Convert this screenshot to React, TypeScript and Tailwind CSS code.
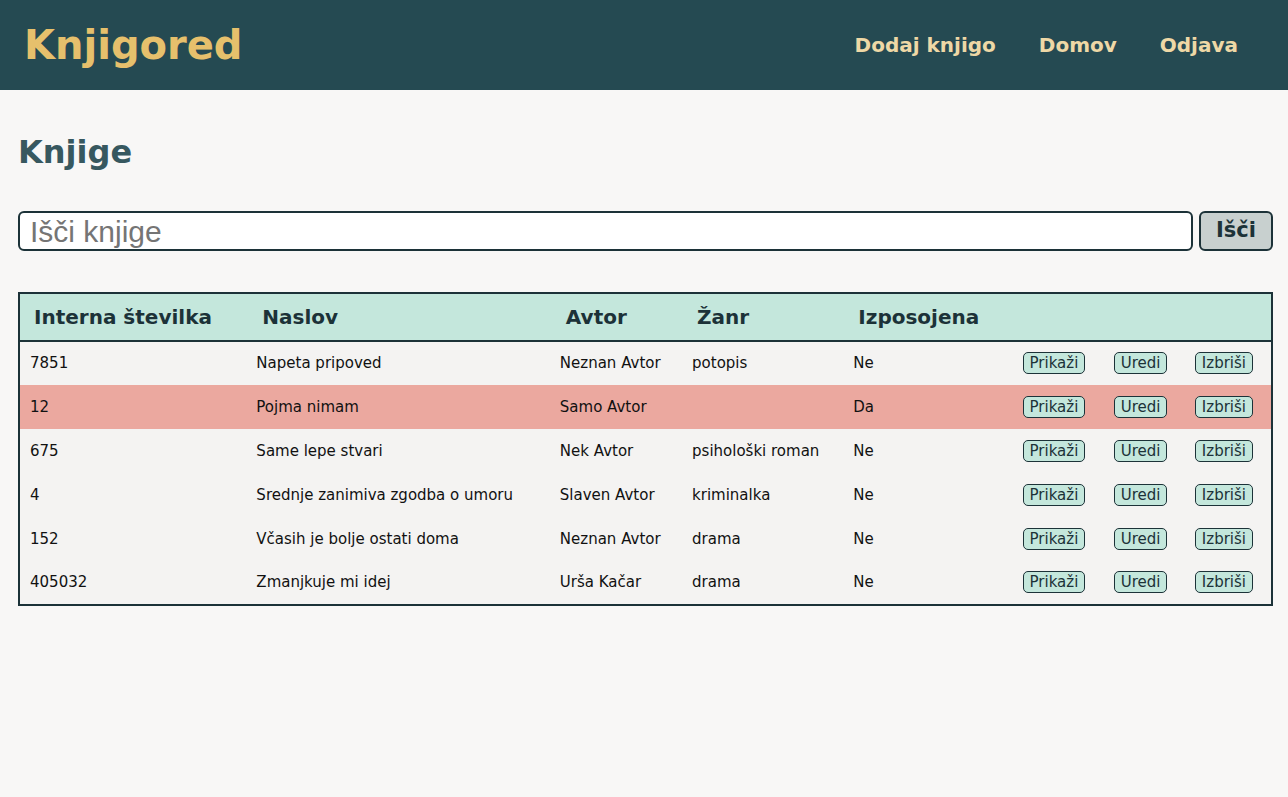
import React from 'react';

interface Book {
  id: string;
  title: string;
  author: string;
  genre: string;
  borrowed: boolean;
}

const books: Book[] = [
  { id: '7851', title: 'Napeta pripoved', author: 'Neznan Avtor', genre: 'potopis', borrowed: false },
  { id: '12', title: 'Pojma nimam', author: 'Samo Avtor', genre: '', borrowed: true },
  { id: '675', title: 'Same lepe stvari', author: 'Nek Avtor', genre: 'psihološki roman', borrowed: false },
  { id: '4', title: 'Srednje zanimiva zgodba o umoru', author: 'Slaven Avtor', genre: 'kriminalka', borrowed: false },
  { id: '152', title: 'Včasih je bolje ostati doma', author: 'Neznan Avtor', genre: 'drama', borrowed: false },
  { id: '405032', title: 'Zmanjkuje mi idej', author: 'Urša Kačar', genre: 'drama', borrowed: false },
];

const ActionButton: React.FC<{ label: string }> = ({ label }) => (
  <button className="h-[22px] bg-[#c4e7dc] border border-[#1c3238] rounded-[5px] px-[6px] text-[15px] leading-[20px] text-[#1c3238]">
    {label}
  </button>
);

const App: React.FC = () => {
  return (
    <div className="min-h-[797px] bg-[#f8f7f6] font-['DejaVu_Sans',sans-serif]">
      {/* Header */}
      <header className="h-[90px] bg-[#254a52] flex items-center justify-between pl-[24px] pr-[50px]">
        <h1 className="text-[40px] font-bold text-[#e6c06c] leading-none">Knjigored</h1>
        <nav className="flex items-center gap-[43px] text-[20px] font-bold text-[#eed8a6] leading-none">
          <a href="#">Dodaj knjigo</a>
          <a href="#">Domov</a>
          <a href="#">Odjava</a>
        </nav>
      </header>

      <main className="pl-[18px] pr-[15px]">
        <h2 className="mt-[43px] text-[32px] leading-[38px] font-bold text-[#37585f]">Knjige</h2>

        {/* Search */}
        <div className="mt-[40px] flex gap-[6px]">
          <input
            type="text"
            placeholder="Išči knjige"
            className="flex-1 h-[40px] bg-white border-2 border-[#1c3238] rounded-[6px] px-[10px] text-[30px] font-['Liberation_Sans',sans-serif] placeholder:text-[#757575] outline-none"
          />
          <button className="w-[74px] h-[40px] bg-[#c8d0cf] border-2 border-[#1c3238] rounded-[6px] text-[21px] font-bold text-[#1c3238]">
            Išči
          </button>
        </div>

        {/* Table */}
        <table className="mt-[41px] w-full table-fixed border-collapse border-2 border-[#1c3238] text-[15px] text-[#111]">
          <colgroup>
            <col className="w-[227px]" />
            <col className="w-[303px]" />
            <col className="w-[132px]" />
            <col className="w-[161px]" />
            <col className="w-[169px]" />
            <col className="w-[91px]" />
            <col className="w-[81px]" />
            <col className="w-[87px]" />
          </colgroup>
          <thead className="bg-[#c4e7dc] text-[#1c3238]">
            <tr className="border-b-2 border-[#1c3238] h-[48px]">
              <th className="text-left pl-[14px] text-[20px] font-bold">Interna številka</th>
              <th className="text-left pl-[16px] text-[20px] font-bold">Naslov</th>
              <th className="text-left pl-[16px] text-[20px] font-bold">Avtor</th>
              <th className="text-left pl-[15px] text-[20px] font-bold">Žanr</th>
              <th className="text-left pl-[15px] text-[20px] font-bold">Izposojena</th>
              <th></th>
              <th></th>
              <th></th>
            </tr>
          </thead>
          <tbody>
            {books.map((b) => (
              <tr key={b.id} className={`h-[44px] ${b.borrowed ? 'bg-[#eba89f]' : 'bg-[#f4f3f2]'}`}>
                <td className="px-[10px]">{b.id}</td>
                <td className="px-[10px]">{b.title}</td>
                <td className="px-[10px]">{b.author}</td>
                <td className="px-[10px]">{b.genre}</td>
                <td className="px-[10px]">{b.borrowed ? 'Da' : 'Ne'}</td>
                <td className="px-[10px]"><ActionButton label="Prikaži" /></td>
                <td className="px-[10px]"><ActionButton label="Uredi" /></td>
                <td className="px-[10px]"><ActionButton label="Izbriši" /></td>
              </tr>
            ))}
          </tbody>
        </table>
      </main>
    </div>
  );
};

export default App;
